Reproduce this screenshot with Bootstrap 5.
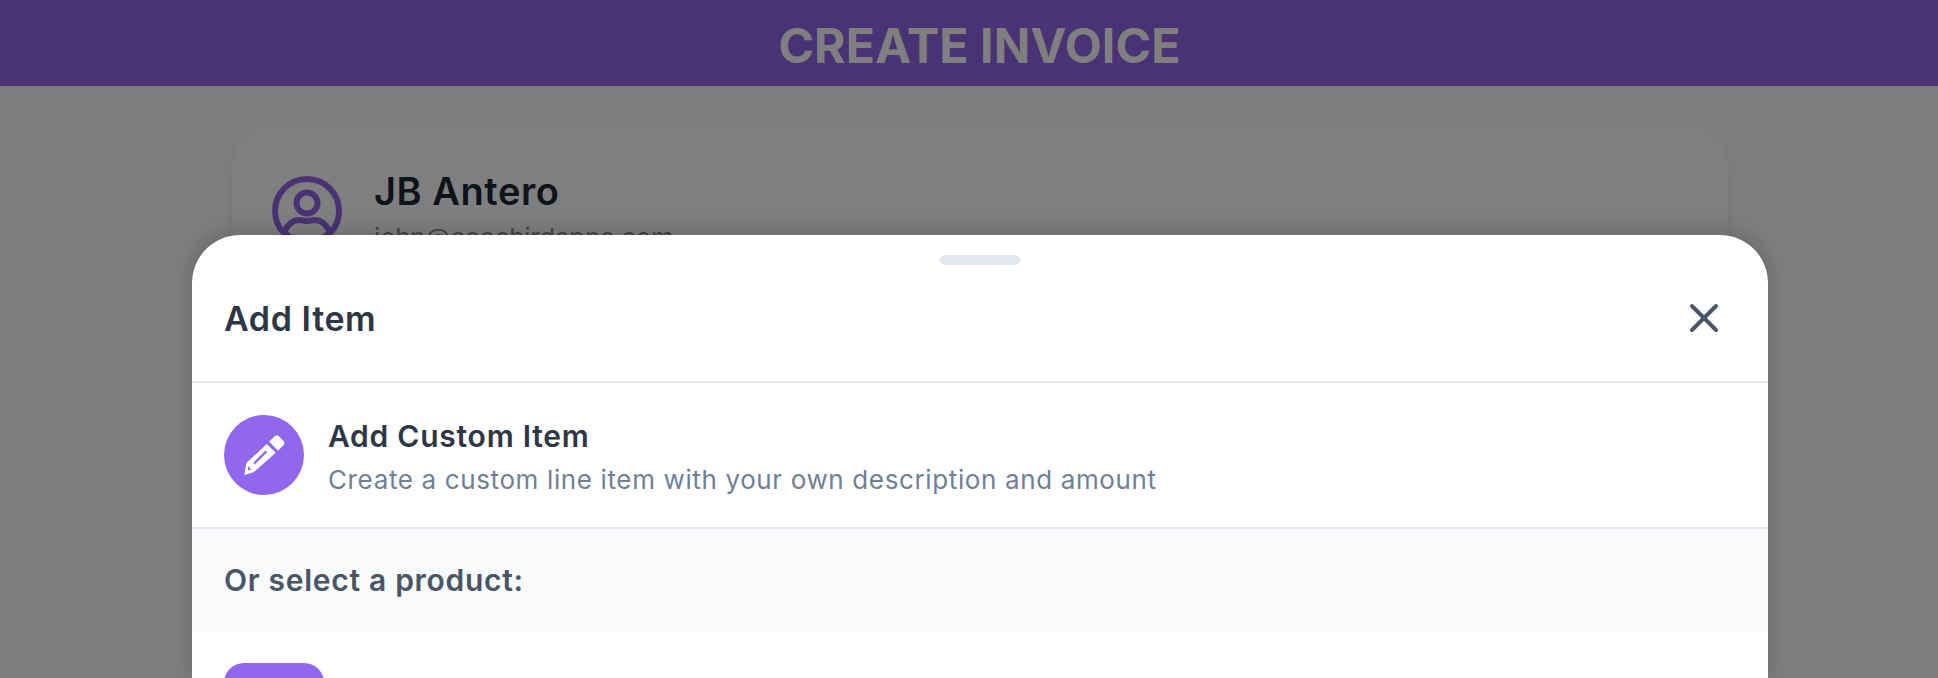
<!DOCTYPE html>
<html lang="en">
<head>
<meta charset="utf-8">
<title>Create Invoice</title>
<link href="https://cdn.jsdelivr.net/npm/bootstrap@5.3.0/dist/css/bootstrap.min.css" rel="stylesheet">
<style>
html,body{height:678px;overflow:hidden;}
body{font-family:Inter,"Liberation Sans",sans-serif;background:#fafbfc;position:relative;}
.app-bar{height:86px;padding:5px 0 0 21px;background:#9366e8;color:#fff;font-size:48px;font-weight:700;letter-spacing:.2px;}
.page-wrap{padding:40px 210px 0 232px;}
.client-box{background:#fff;border-radius:40px;padding:40px;box-shadow:0 4px 12px rgba(0,0,0,.05);height:300px;gap:32px;}
.client-info{padding-top:2px;}
.client-name{font-size:38px;font-weight:600;letter-spacing:.55px;color:#1f2937;line-height:46px;margin-bottom:4px;}
.client-mail{font-size:26px;letter-spacing:-.3px;color:#858b96;line-height:40px;}
.avatar-ring{flex:none;margin-top:10px;}
.scrim{position:absolute;inset:0;background:rgba(0,0,0,.5);}
.sheet{position:absolute;left:192px;width:1576px;top:235px;bottom:0;background:#fff;border-radius:48px 48px 0 0;box-shadow:0 -4px 20px rgba(0,0,0,.18);overflow:hidden;}
.grab{width:80px;height:10px;border-radius:5px;background:#e5e7ef;margin:20px auto 0;}
.sheet-head{height:118px;padding:0 48px 10px 32px;border-bottom:2px solid #e5e7ef;color:#2d3748;font-size:34px;font-weight:600;letter-spacing:.6px;}
.custom-row{height:146px;padding:32px;gap:24px;border-bottom:2px solid #e5e7ef;}
.pen-disc{width:80px;height:80px;border-radius:50%;background:#9167ee;flex:none;}
.custom-title{font-size:30px;font-weight:600;letter-spacing:.75px;color:#2d3748;line-height:40px;padding-top:1px;}
.custom-desc{font-size:26px;letter-spacing:.63px;color:#718096;line-height:30px;padding-top:9px;}
.select-label{height:102px;padding:0 32px;background:#f9fafc;color:#4a5568;font-size:30px;font-weight:600;letter-spacing:.7px;}
.prod-row{padding:32px;gap:24px;}
.prod-thumb{width:100px;height:100px;border-radius:20px;background:#9167ee;flex:none;}
</style>
</head>
<body>
<header class="app-bar d-flex align-items-center justify-content-center">CREATE INVOICE</header>
<main class="page-wrap">
  <section class="client-box d-flex">
    <svg class="avatar-ring" width="70" height="70" viewBox="0 0 70 70" fill="none" stroke="#9366e8" stroke-width="6"><circle cx="35" cy="35" r="32"/><circle cx="35" cy="27" r="10.5"/><path d="M12 56c4-8 9-12 15-12 3 0 5 1 8 1s5-1 8-1c6 0 11 4 15 12M12 56c5 6 13 10 23 10s18-4 23-10"/></svg>
    <div class="client-info">
      <div class="client-name">JB Antero</div>
      <div class="client-mail">john@coachirdapps.com</div>
    </div>
  </section>
</main>
<div class="scrim"></div>
<div class="sheet">
  <div class="grab"></div>
  <div class="sheet-head d-flex align-items-center justify-content-between">
    <span>Add Item</span>
    <svg width="32" height="32" viewBox="0 0 32 32" fill="none" stroke="#4a5568" stroke-width="4" stroke-linecap="round"><path d="M4 4l24 24M28 4L4 28"/></svg>
  </div>
  <div class="custom-row d-flex align-items-center">
    <div class="pen-disc d-flex align-items-center justify-content-center">
      <svg width="42" height="43" viewBox="100 100 125 130"><path fill="#fff" d="M178 123l18-17c3-3 8-3 11 0l15 16c3 3 3 8 0 11l-17 18z"/><path fill="#fff" fill-rule="evenodd" d="M171 130l27 27-66 58-29 10 6-37zM167 150l-37 37 4 5 38-37zM116 197l-3 13 12-3-5-3-1-5z"/></svg>
    </div>
    <div>
      <div class="custom-title">Add Custom Item</div>
      <div class="custom-desc">Create a custom line item with your own description and amount</div>
    </div>
  </div>
  <div class="select-label d-flex align-items-center">Or select a product:</div>
  <div class="prod-row d-flex"><div class="prod-thumb"></div></div>
</div>
<script src="https://cdn.jsdelivr.net/npm/bootstrap@5.3.0/dist/js/bootstrap.bundle.min.js"></script>
</body>
</html>
